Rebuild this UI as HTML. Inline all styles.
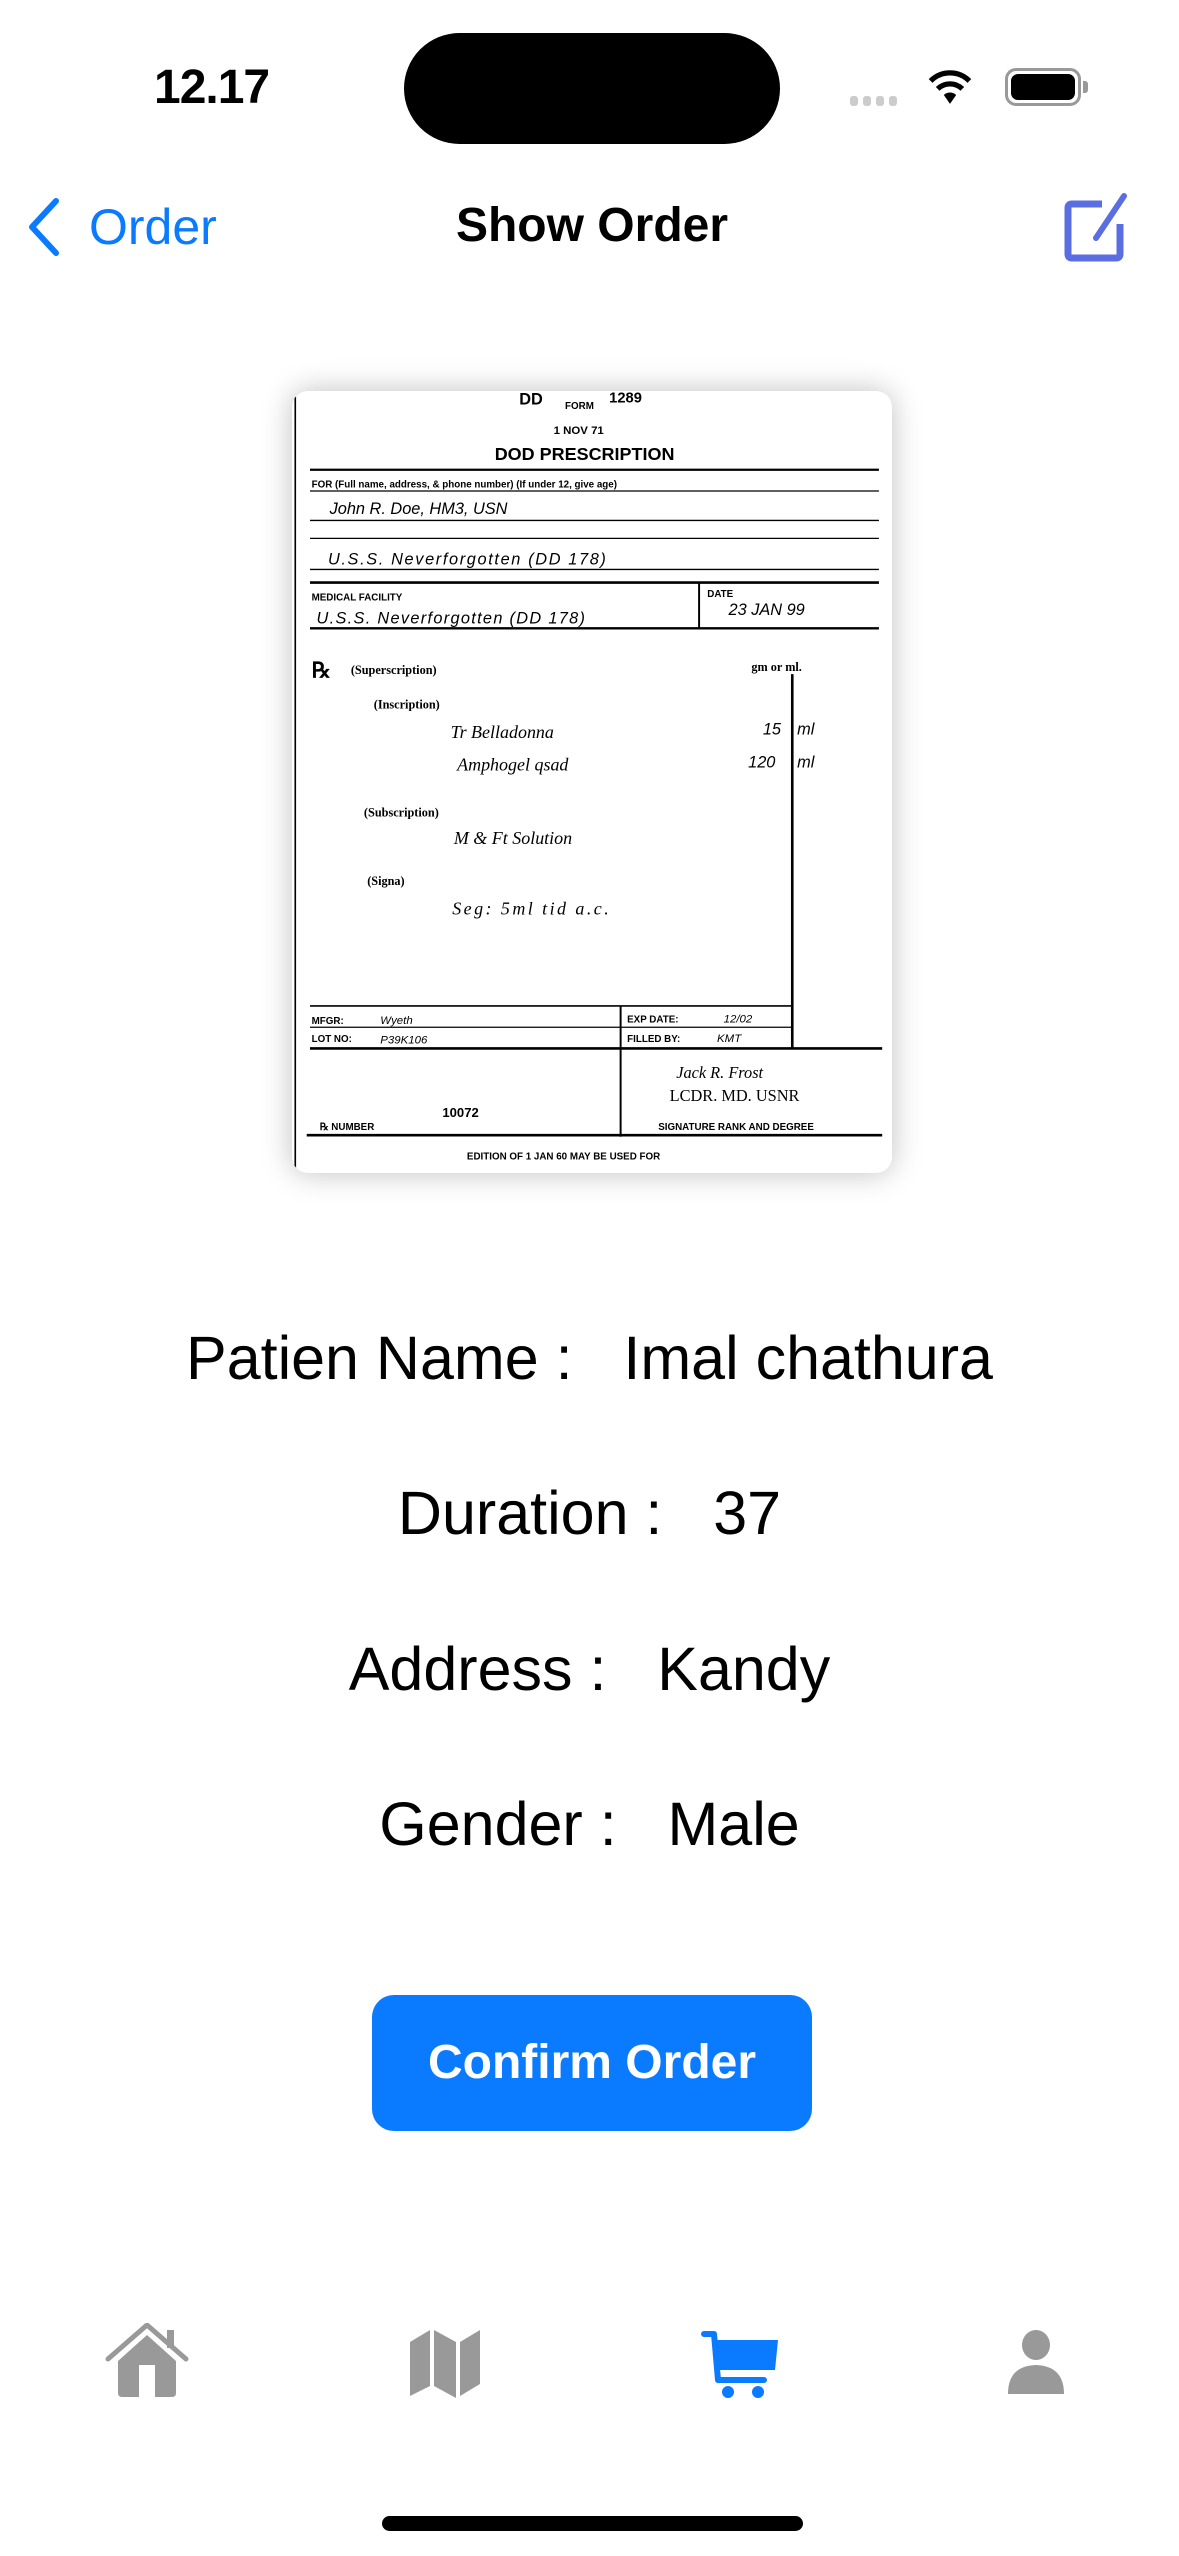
<!DOCTYPE html>
<html><head><meta charset="utf-8"><style>
*{margin:0;padding:0;box-sizing:border-box}
body{width:1179px;height:2556px;background:#fff;position:relative;overflow:hidden;font-family:"Liberation Sans",sans-serif}
.a{position:absolute}
.row{position:absolute;left:0;width:1179px;text-align:center;font-size:61px;color:#000;line-height:80px;white-space:pre}
</style></head><body>
<div class="a" style="left:154px;top:60px;font-size:48px;font-weight:bold;letter-spacing:-1px">12.17</div>
<div class="a" style="left:404px;top:33px;width:376px;height:111px;background:#000;border-radius:56px"></div>
<div class="a" style="left:850px;top:96px;width:8px;height:10px;background:#ccc;border-radius:3px;box-shadow:13px 0 #ccc,26px 0 #ccc,39px 0 #ccc"></div>
<svg class="a" style="left:928px;top:70px" width="44" height="36" viewBox="0 0 50 40"><path d="M25 38 L18 28 A10 10 0 0 1 32 28Z" fill="#000"/><path d="M11 21 A20 20 0 0 1 39 21" stroke="#000" stroke-width="6" fill="none"/><path d="M3 12 A31 31 0 0 1 47 12" stroke="#000" stroke-width="6" fill="none"/></svg>
<div class="a" style="left:1005px;top:68px;width:76px;height:38px;border:3px solid #999;border-radius:11px;padding:3px"><div style="width:100%;height:100%;background:#000;border-radius:7px"></div></div>
<div class="a" style="left:1083px;top:81px;width:5px;height:12px;background:#999;border-radius:0 3px 3px 0"></div>
<svg class="a" style="left:24px;top:196px" width="40" height="62" viewBox="0 0 40 62"><path d="M32 5 L8 31 L32 57" stroke="#0a7aff" stroke-width="6" fill="none" stroke-linecap="round" stroke-linejoin="round"/></svg>
<div class="a" style="left:89px;top:198px;font-size:50px;color:#0a7aff">Order</div>
<div class="a" style="left:0;width:1184px;top:198px;text-align:center;font-size:48px;font-weight:bold">Show Order</div>
<svg class="a" style="left:1062px;top:192px" width="70" height="72" viewBox="0 0 70 72"><path d="M40 12 H10 Q6 12 6 16 V62 Q6 66 10 66 H54 Q58 66 58 62 V32" stroke="#5b6ee1" stroke-width="7" fill="none" stroke-linejoin="round"/><path d="M62 4 L34 46" stroke="#5b6ee1" stroke-width="6" stroke-linecap="round"/></svg>

<div class="a" style="left:292px;top:391px;width:600px;height:782px;border-radius:16px;box-shadow:0 0 30px rgba(0,0,0,.25);overflow:hidden;background:#fff">
<svg width="600" height="782" viewBox="178 239 367 478" style="display:block;font-family:'Liberation Sans',sans-serif">
<g stroke="#000" fill="none">
<line x1="180" y1="239" x2="180" y2="717" stroke-width="1"/>
<line x1="189" y1="287" x2="537" y2="287" stroke-width="1.4"/>
<line x1="189" y1="300" x2="537" y2="300" stroke-width=".8"/>
<line x1="189" y1="318" x2="537" y2="318" stroke-width=".8"/>
<line x1="189" y1="329" x2="537" y2="329" stroke-width=".8"/>
<line x1="189" y1="348" x2="537" y2="348" stroke-width=".8"/>
<line x1="189" y1="356" x2="537" y2="356" stroke-width="1.6"/>
<line x1="427" y1="356" x2="427" y2="384" stroke-width="1.2"/>
<line x1="189" y1="384" x2="537" y2="384" stroke-width="1.4"/>
<line x1="484" y1="412" x2="484" y2="641" stroke-width="1.6"/>
<line x1="189" y1="615" x2="484" y2="615" stroke-width="1"/>
<line x1="189" y1="628" x2="484" y2="628" stroke-width=".8"/>
<line x1="189" y1="641" x2="539" y2="641" stroke-width="1.6"/>
<line x1="379" y1="615" x2="379" y2="695" stroke-width="1.2"/>
<line x1="187" y1="694" x2="539" y2="694" stroke-width="1.6"/>
</g>
<g font-weight="bold" fill="#000">
<text x="317" y="247" font-size="10">DD</text><text x="345" y="250" font-size="6">FORM</text><text x="372" y="246" font-size="9">1289</text>
<text x="338" y="265" font-size="7">1  NOV  71</text>
<text x="302" y="281" font-size="11">DOD PRESCRIPTION</text>
<text x="190" y="298" font-size="6">FOR  (Full name, address, &amp; phone number) (If under 12, give age)</text>
<text x="190" y="367" font-size="6">MEDICAL FACILITY</text><text x="432" y="365" font-size="6">DATE</text>
<text x="190" y="626" font-size="6">MFGR:</text><text x="190" y="637" font-size="6">LOT NO:</text>
<text x="383" y="625" font-size="6">EXP DATE:</text><text x="383" y="637" font-size="6">FILLED BY:</text>
<text x="270" y="683" font-size="8">10072</text>
<text x="195" y="691" font-size="6">℞  NUMBER</text>
<text x="402" y="691" font-size="6">SIGNATURE  RANK  AND DEGREE</text>
<text x="285" y="709" font-size="6">EDITION OF 1 JAN 60 MAY BE USED  FOR</text>
</g>
<g font-family="'Liberation Serif',serif" fill="#000" font-size="7.5" font-weight="bold">
<text x="190" y="414" font-size="13">℞</text><text x="214" y="412">(Superscription)</text>
<text x="459" y="410">gm or ml.</text>
<text x="228" y="433">(Inscription)</text>
<text x="222" y="499">(Subscription)</text>
<text x="224" y="541">(Signa)</text>
</g>
<g font-style="italic" fill="#000" font-size="10">
<text x="201" y="314">John R. Doe, HM3, USN</text>
<text x="200" y="345" letter-spacing="1">U.S.S. Neverforgotten    (DD 178)</text>
<text x="193" y="381" letter-spacing=".8">U.S.S. Neverforgotten (DD 178)</text>
<text x="445" y="376">23 JAN 99</text>
<text x="275" y="451" font-size="11" font-family="'Liberation Serif',serif">Tr Belladonna</text>
<text x="279" y="471" font-size="11" font-family="'Liberation Serif',serif">Amphogel qsad</text>
<text x="466" y="449">15</text><text x="487" y="449">ml</text>
<text x="457" y="469">120</text><text x="487" y="469">ml</text>
<text x="277" y="516" font-size="11" font-family="'Liberation Serif',serif">M &amp; Ft Solution</text>
<text x="276" y="559" font-size="11" font-family="'Liberation Serif',serif" letter-spacing="1.5">Seg: 5ml tid a.c.</text>
<text x="232" y="626" font-size="7">Wyeth</text><text x="232" y="638" font-size="7">P39K106</text>
<text x="442" y="625" font-size="7">12/02</text><text x="438" y="637" font-size="7">KMT</text>
<text x="413" y="659" font-family="'Liberation Serif',serif">Jack R. Frost</text>
<text x="409" y="673" font-style="normal" font-family="'Liberation Serif',serif">LCDR. MD. USNR</text>
</g>
</svg></div>

<div class="row" style="top:1318px">Patien Name :   Imal chathura</div>
<div class="row" style="top:1473px">Duration :   37</div>
<div class="row" style="top:1629px">Address :   Kandy</div>
<div class="row" style="top:1784px">Gender :   Male</div>

<div class="a" style="left:372px;top:1995px;width:440px;height:136px;background:#0a7aff;border-radius:22px;color:#fff;font-size:48px;font-weight:bold;text-align:center;line-height:136px">Confirm Order</div>

<svg class="a" style="left:105px;top:2323px" width="84" height="75" viewBox="0 0 84 75"><path d="M3 36 L42 2 L81 36" stroke="#999" stroke-width="5" fill="none" stroke-linecap="round" stroke-linejoin="round"/><rect x="62" y="7" width="7" height="18" fill="#999"/><path d="M13 38 L42 12 L71 38 V70 Q71 74 67 74 H17 Q13 74 13 70Z" fill="#999"/><rect x="34" y="42" width="16" height="32" fill="#fff"/></svg>
<svg class="a" style="left:408px;top:2330px" width="74" height="68" viewBox="0 0 74 68"><path d="M2 12 L22 0 V56 L2 66Z" fill="#999"/><path d="M26 0 L48 12 V68 L26 56Z" fill="#999"/><path d="M52 12 L72 0 V54 L52 66Z" fill="#999"/></svg>
<svg class="a" style="left:700px;top:2330px" width="80" height="70" viewBox="0 0 80 70"><path d="M4 4 H14 L18 50 H64" stroke="#0a7aff" stroke-width="6" fill="none" stroke-linecap="round" stroke-linejoin="round"/><path d="M16 10 H78 L75 40 H19Z" fill="#0a7aff"/><circle cx="28" cy="62" r="6" fill="#0a7aff"/><circle cx="58" cy="62" r="6" fill="#0a7aff"/></svg>
<svg class="a" style="left:1006px;top:2330px" width="60" height="66" viewBox="0 0 60 66"><ellipse cx="30" cy="15" rx="14" ry="15" fill="#999"/><path d="M2 64 Q2 36 30 35 Q58 36 58 64Z" fill="#999"/></svg>

<div class="a" style="left:382px;top:2516px;width:421px;height:15px;background:#000;border-radius:8px"></div>
</body></html>
